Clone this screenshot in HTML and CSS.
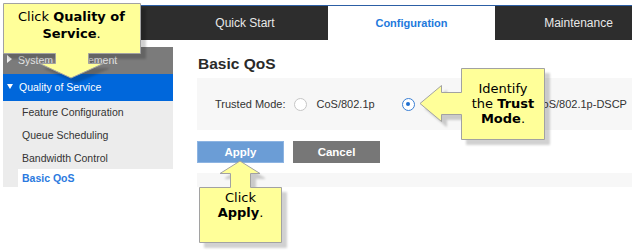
FILE: index.html
```html
<!DOCTYPE html>
<html lang="en">
<head>
    <meta charset="UTF-8">
    <title>Basic QoS</title>
    <link rel="stylesheet" href="styles.css">
</head>
<body>
    <div class="page">
        <div class="topnav">
            <div class="brand"></div>
            <a class="tab">Quick Start</a>
            <a class="tab active">Configuration</a>
            <a class="tab">Maintenance</a>
        </div>

        <div class="main">
            <nav class="sidebar">
                <div class="menu-head">System Management</div>
                <div class="menu-head open">Quality of Service</div>
                <ul class="submenu">
                    <li>Feature Configuration</li>
                    <li>Queue Scheduling</li>
                    <li>Bandwidth Control</li>
                    <li class="current">Basic QoS</li>
                </ul>
            </nav>

            <section class="content">
                <h2>Basic QoS</h2>
                <div class="panel">
                    <span class="field-label">Trusted Mode:</span>
                    <label class="option"><span class="radio"></span>CoS/802.1p</label>
                    <label class="option checked"><span class="radio"></span><span class="far">CoS/802.1p-DSCP</span></label>
                </div>
                <div class="actions">
                    <button class="btn apply">Apply</button>
                    <button class="btn cancel">Cancel</button>
                </div>
                <div class="strip"></div>
            </section>
        </div>

        <!-- tutorial callouts -->
        <div class="callout callout-qos">
            <svg width="150" height="85" viewBox="0 0 150 85">
                <path d="M3.5 3.5 H140.5 V53.5 H88.5 V63.5 H103.5 L71 78 L39.5 63.5 H55.5 V53.5 H3.5 Z"/>
            </svg>
            <div class="callout-text">Click <b>Quality of Service</b>.</div>
        </div>

        <div class="callout callout-trust">
            <svg width="140" height="85" viewBox="0 0 140 85">
                <path d="M46.5 6.5 H129.5 V77.5 H46.5 V52.5 H26.5 V59.5 L5 41.5 L26.5 23.5 V30.5 H46.5 Z"/>
            </svg>
            <div class="callout-text">Identify<br>the <b>Trust</b><br><b>Mode</b>.</div>
        </div>

        <div class="callout callout-apply">
            <svg width="100" height="95" viewBox="0 0 100 95">
                <path d="M4.5 31.5 H35.5 V17.5 H25 L45 5 L65 17.5 H55.5 V31.5 H86.5 V86.5 H4.5 Z"/>
            </svg>
            <div class="callout-text">Click<br><b>Apply</b>.</div>
        </div>
    </div>
</body>
</html>
```

FILE: styles.css
```css
body {
    margin: 0;
    background: #ffffff;
    font-family: "Liberation Sans", Arial, sans-serif;
    color: #333333;
}

.page {
    position: relative;
    width: 636px;
    height: 251px;
    box-sizing: border-box;
    padding: 5px 4px 0 3px;
    overflow: hidden;
}

/* top navigation */
.topnav {
    display: flex;
    height: 34px;
    border-top: 1px solid #2c5fa5;
    background: #2d2d2d;
    overflow: hidden;
}

.brand {
    width: 159px;
    flex-shrink: 0;
}

.tab {
    width: 167px;
    flex-shrink: 0;
    text-align: center;
    line-height: 34px;
    font-size: 12px;
    color: #e8e8e8;
}

.tab:first-of-type {
    width: 166px;
}

.tab.active {
    background: #ffffff;
    color: #2279dc;
    font-weight: bold;
    font-size: 11px;
}

/* body */
.main {
    display: flex;
    margin-top: 7px;
}

.sidebar {
    width: 170px;
    flex-shrink: 0;
    font-size: 10.5px;
}

.menu-head {
    height: 27px;
    line-height: 27px;
    padding-left: 4px;
    background: #7b7b7b;
    color: #e4e4e4;
}

.menu-head::before {
    content: "";
    display: inline-block;
    margin-right: 6px;
    vertical-align: 1px;
    border-top: 4px solid transparent;
    border-bottom: 4px solid transparent;
    border-left: 5px solid #f0f0f0;
}

.menu-head.open {
    background: #0067db;
    color: #ffffff;
}

.menu-head.open::before {
    border-left: 3px solid transparent;
    border-right: 3px solid transparent;
    border-top: 5px solid #ffffff;
    border-bottom: 0;
    margin-right: 6px;
    vertical-align: 2px;
}

.submenu {
    list-style: none;
    margin: 0;
    padding: 0;
    background: #ececec;
}

.submenu li {
    height: 23px;
    line-height: 23px;
    padding-left: 19px;
}

.submenu li:nth-child(3) {
    height: 22px;
    line-height: 22px;
}

.submenu li.current {
    height: 18px;
    line-height: 18px;
    margin-left: 15px;
    padding-left: 4px;
    background: #ffffff;
    color: #2b7ae0;
    font-weight: bold;
}

.content {
    flex: 1;
    margin-left: 24px;
}

.content h2 {
    margin: 8px 0 5px 1px;
    font-size: 15.5px;
    line-height: 18px;
    color: #2a2a2a;
}

.panel {
    display: flex;
    align-items: center;
    height: 52px;
    padding-left: 18px;
    background: #f7f7f7;
    font-size: 11px;
}

.option {
    display: flex;
    align-items: center;
    margin-left: 27px;
}

.field-label + .option {
    margin-left: 8px;
}

.radio {
    width: 11px;
    height: 11px;
    margin-right: 10px;
    border: 1px solid #c6c6c6;
    border-radius: 50%;
    background: #ffffff;
    position: relative;
}

.option.checked .radio {
    border-color: #3a7fd4;
}

.option.checked .radio::after {
    content: "";
    position: absolute;
    left: 3.5px;
    top: 3.5px;
    width: 4px;
    height: 4px;
    border-radius: 50%;
    background: #1f6fd0;
}

.far {
    margin-left: 110px;
}

.actions {
    display: flex;
    gap: 9px;
    margin-top: 11px;
}

.btn {
    width: 87px;
    height: 22px;
    padding: 0;
    border: 0;
    font-family: "Liberation Sans", Arial, sans-serif;
    font-size: 11.5px;
    font-weight: bold;
    color: #ffffff;
}

.btn.apply {
    background: #6b9dd6;
    box-shadow: inset 0 0 0 1px #8db4e2;
}

.btn.cancel {
    background: #777777;
}

.strip {
    height: 14px;
    margin-top: 10px;
    background: #f7f7f7;
}

/* callouts */
.callout {
    position: absolute;
}

.callout svg {
    position: absolute;
    left: 0;
    top: 0;
    filter: drop-shadow(5px 5px 1px rgba(0, 0, 0, 0.18));
}

.callout path {
    fill: #ffff99;
    stroke: #a2a2a2;
    stroke-width: 1;
}

.callout-text {
    position: absolute;
    text-align: center;
    font-family: "DejaVu Sans", Verdana, sans-serif;
    font-size: 13px;
    color: #000000;
}

.callout-qos {
    left: 0;
    top: 0;
    width: 150px;
    height: 85px;
}

.callout-qos .callout-text {
    left: 3px;
    top: 8px;
    width: 137px;
    line-height: 17px;
}

.callout-trust {
    left: 415px;
    top: 62px;
    width: 140px;
    height: 85px;
}

.callout-trust .callout-text {
    left: 46px;
    top: 19px;
    width: 84px;
    line-height: 15px;
}

.callout-apply {
    left: 195px;
    top: 156px;
    width: 100px;
    height: 95px;
}

.callout-apply .callout-text {
    left: 4px;
    top: 34px;
    width: 83px;
    line-height: 15px;
}
```
